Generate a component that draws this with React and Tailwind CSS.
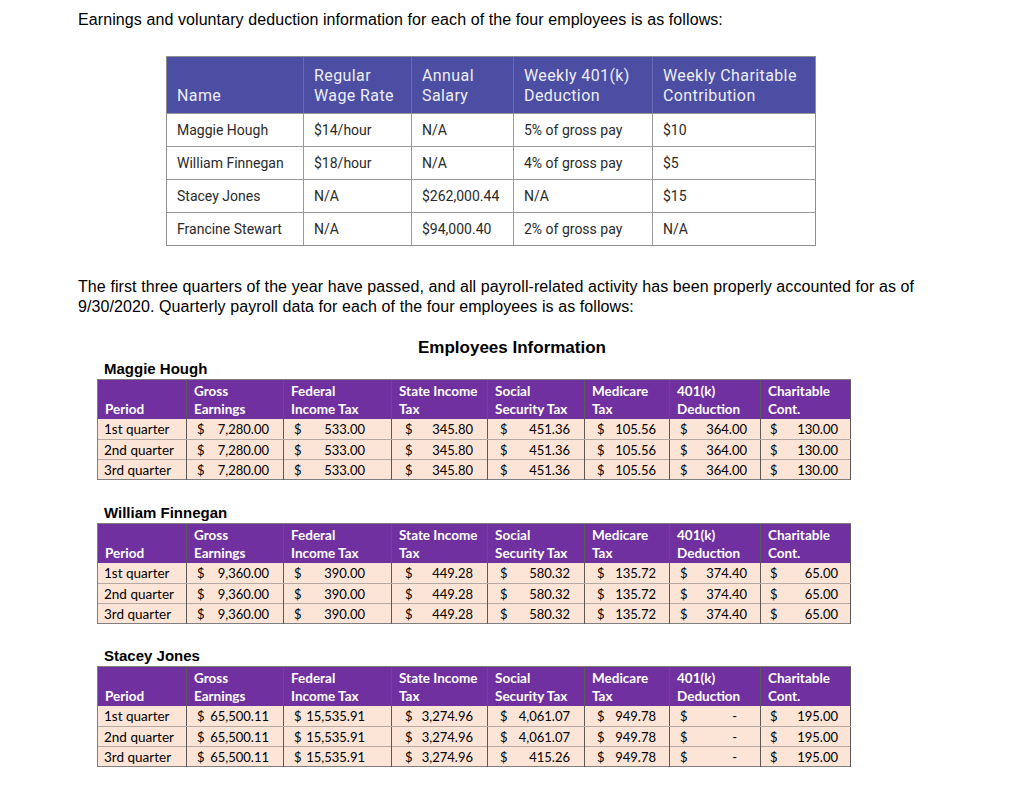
import React from "react";

const topRows = [
  ["Maggie Hough", "$14/hour", "N/A", "5% of gross pay", "$10"],
  ["William Finnegan", "$18/hour", "N/A", "4% of gross pay", "$5"],
  ["Stacey Jones", "N/A", "$262,000.44", "N/A", "$15"],
  ["Francine Stewart", "N/A", "$94,000.40", "2% of gross pay", "N/A"],
];

const topHeaders = [
  ["Name"],
  ["Regular", "Wage Rate"],
  ["Annual", "Salary"],
  ["Weekly 401(k)", "Deduction"],
  ["Weekly Charitable", "Contribution"],
];

const empHeaders = [
  ["Period"],
  ["Gross", "Earnings"],
  ["Federal", "Income Tax"],
  ["State Income", "Tax"],
  ["Social", "Security Tax"],
  ["Medicare", "Tax"],
  ["401(k)", "Deduction"],
  ["Charitable", "Cont."],
];

const padCls = [
  "",
  "pl-[10px] pr-[14px]",
  "pl-[10px] pr-[26px]",
  "pl-[13px] pr-[14px]",
  "pl-[12px] pr-[14px]",
  "pl-[12px] pr-[13px]",
  "pl-[10px] pr-[13px]",
  "pl-[9px] pr-[12px]",
];

const employees = [
  {
    name: "Maggie Hough",
    rows: [
      ["1st quarter", "7,280.00", "533.00", "345.80", "451.36", "105.56", "364.00", "130.00"],
      ["2nd quarter", "7,280.00", "533.00", "345.80", "451.36", "105.56", "364.00", "130.00"],
      ["3rd quarter", "7,280.00", "533.00", "345.80", "451.36", "105.56", "364.00", "130.00"],
    ],
  },
  {
    name: "William Finnegan",
    rows: [
      ["1st quarter", "9,360.00", "390.00", "449.28", "580.32", "135.72", "374.40", "65.00"],
      ["2nd quarter", "9,360.00", "390.00", "449.28", "580.32", "135.72", "374.40", "65.00"],
      ["3rd quarter", "9,360.00", "390.00", "449.28", "580.32", "135.72", "374.40", "65.00"],
    ],
  },
  {
    name: "Stacey Jones",
    rows: [
      ["1st quarter", "65,500.11", "15,535.91", "3,274.96", "4,061.07", "949.78", "-", "195.00"],
      ["2nd quarter", "65,500.11", "15,535.91", "3,274.96", "4,061.07", "949.78", "-", "195.00"],
      ["3rd quarter", "65,500.11", "15,535.91", "3,274.96", "415.26", "949.78", "-", "195.00"],
    ],
  },
];

function TopTable() {
  return (
    <div className="ml-[166px] mt-[26px] w-[650px] border border-[#8f8f8f] font-['Roboto',sans-serif]">
      <div className="grid grid-cols-[136px_108px_102px_139px_163px] bg-[#4b4ea2] h-[56px]">
        {topHeaders.map((h, i) => (
          <div
            key={i}
            className={`flex flex-col justify-end pb-[7px] pl-[10px] text-[16px] leading-[20px] tracking-[0.4px] text-[#eeedf6] ${
              i > 0 ? "border-l border-[#6a69ad]" : ""
            }`}
          >
            {h.map((l, j) => (
              <span key={j}>{l}</span>
            ))}
          </div>
        ))}
      </div>
      {topRows.map((r, ri) => (
        <div
          key={ri}
          className="grid grid-cols-[136px_108px_102px_139px_163px] h-[33px] border-t border-[#9a9a9a]"
        >
          {r.map((c, ci) => (
            <div
              key={ci}
              className={`flex items-center pl-[10px] text-[14px] text-[#2a2a2a] ${
                ci > 0 ? "border-l border-[#9a9a9a]" : ""
              }`}
            >
              {c}
            </div>
          ))}
        </div>
      ))}
    </div>
  );
}

function EmpTable({ emp, mt }) {
  return (
    <div className={mt}>
      <div className="ml-[104px] text-[15px] leading-[20px] font-bold text-black">{emp.name}</div>
      <div className="ml-[97px] w-[754px] font-['Lato',sans-serif] text-[13.5px] border-l border-[#7f7f7f] border-b border-b-[#7f7f7f]">
        <div className="grid grid-cols-[89px_97px_108px_96px_97px_85px_91px_90px] h-[40px] bg-[#7030a0] border-t border-[#7f7f7f]">
          {empHeaders.map((h, i) => (
            <div
              key={i}
              className="flex flex-col justify-end pl-[7px] pb-[1px] leading-[18px] font-bold text-white border-r border-[#5a5a5a]"
            >
              {h.map((l, j) => (
                <span key={j}>{l}</span>
              ))}
            </div>
          ))}
        </div>
        {emp.rows.map((r, ri) => (
          <div
            key={ri}
            className={`grid grid-cols-[89px_97px_108px_96px_97px_85px_91px_90px] h-[20px] bg-[#fce4d6] ${
              ri > 0 ? "border-t border-[#b5a9a4]" : ""
            }`}
          >
            {r.map((c, ci) =>
              ci === 0 ? (
                <div key={ci} className="flex items-center pl-[6px] leading-[20px] text-black border-r border-[#5a5a5a]">
                  {c}
                </div>
              ) : (
                <div
                  key={ci}
                  className={`flex items-center justify-between leading-[20px] text-[13px] text-black border-r border-[#5a5a5a] ${padCls[ci]}`}
                >
                  <span>$</span>
                  <span className={c === "-" ? "mr-[10px]" : ""}>{c}</span>
                </div>
              )
            )}
          </div>
        ))}
      </div>
    </div>
  );
}

export default function App() {
  return (
    <div className="w-[1024px] h-[798px] bg-white overflow-hidden font-['Liberation_Sans',Arial,sans-serif] text-black">
      <p className="pl-[78px] pt-[10px] text-[16px] leading-[20px] tracking-[0.09px]">
        Earnings and voluntary deduction information for each of the four employees is as follows:
      </p>
      <TopTable />
      <p className="pl-[78px] mt-[31px] text-[16px] leading-[20px] tracking-[0.09px] w-[980px]">
        The first three quarters of the year have passed, and all payroll-related activity has been properly accounted for as of
        <br />
        9/30/2020. Quarterly payroll data for each of the four employees is as follows:
      </p>
      <div className="mt-[21px] text-center w-[1024px] text-[17px] leading-[20px] font-bold">
        Employees Information
      </div>
      <EmpTable emp={employees[0]} mt="mt-[1px]" />
      <EmpTable emp={employees[1]} mt="mt-[23px]" />
      <EmpTable emp={employees[2]} mt="mt-[22px]" />
    </div>
  );
}
